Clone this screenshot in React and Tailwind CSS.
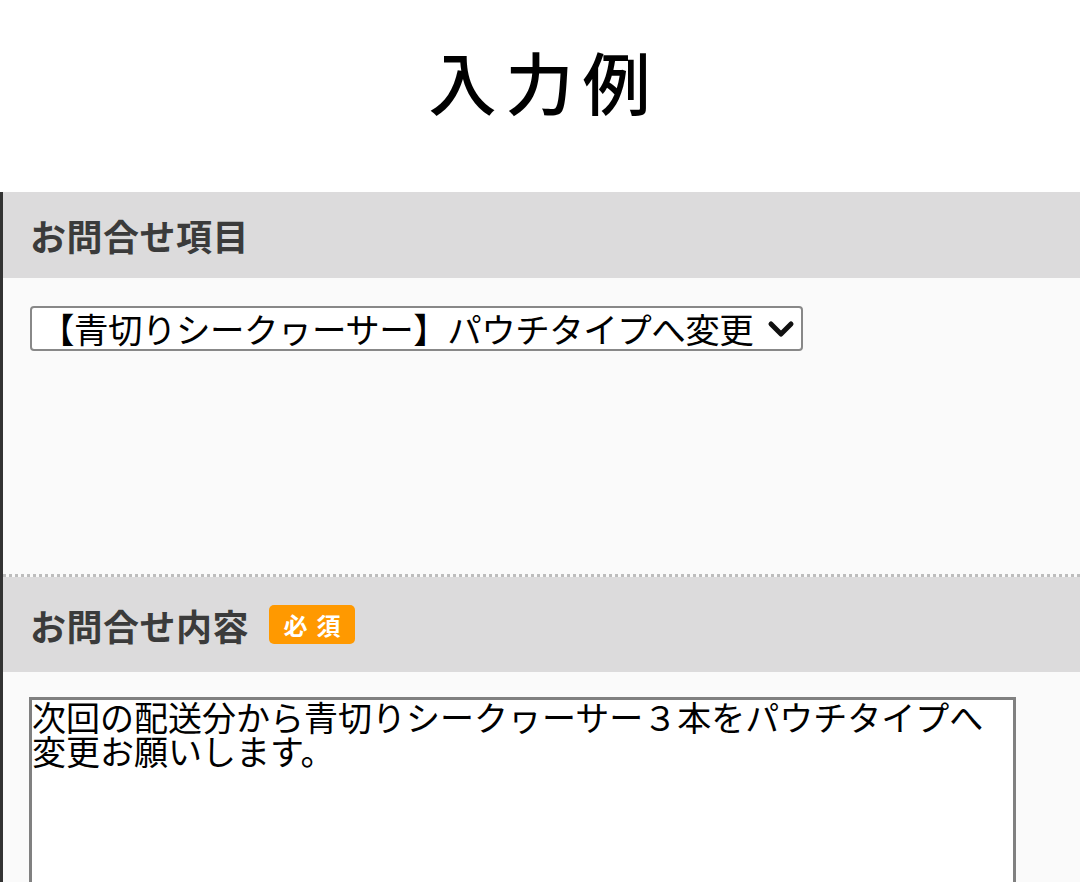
const JP = { fontFamily: '"Noto Sans CJK JP", "Noto Sans", sans-serif' };

export default function App() {
  return (
    <div className="w-[1080px] h-[882px] overflow-hidden bg-white" style={JP}>
      {/* タイトル */}
      <div className="h-[192px] flex items-start justify-center pt-[36px] pl-[8px]">
        <h1 className="text-[68px] leading-[90px] tracking-[9px] text-black font-medium">入力例</h1>
      </div>

      <div className="border-l-[3px] border-[#333] bg-[#fafafa]">
        {/* お問合せ項目 */}
        <div className="h-[86px] bg-[#dcdbdc] flex items-center pl-[27px]">
          <h2 className="text-[36px] font-bold text-[#3b3b3b] tracking-[0.5px]">お問合せ項目</h2>
        </div>
        <div className="h-[296px] pt-[28px] pl-[27px]">
          <div className="w-[773px] h-[45px] bg-white border-2 border-[#888] rounded-[4px] flex items-center pl-[8px] pr-[6px]">
            <span className="flex-1 text-[34.5px] leading-none text-black whitespace-nowrap tracking-[-0.5px]">
              【青切りシークヮーサー】パウチタイプへ変更
            </span>
            <svg width="28" height="20" viewBox="0 0 28 20" className="shrink-0">
              <path d="M4 5 L14 15 L24 5" fill="none" stroke="#111" strokeWidth="5" strokeLinecap="round" strokeLinejoin="round" />
            </svg>
          </div>
        </div>

        <div className="border-t-[3px] border-dotted border-[#bdbdbd]" />

        {/* お問合せ内容 */}
        <div className="h-[95px] bg-[#dcdbdc] flex items-center pl-[27px] gap-[20px]">
          <h2 className="text-[36px] font-bold text-[#3b3b3b] tracking-[0.5px]">お問合せ内容</h2>
          <span className="w-[86px] h-[39px] bg-[#ff9900] rounded-[5px] flex items-center justify-center text-white text-[24px] leading-none font-bold tracking-[9px] pl-[9px] whitespace-nowrap">
            必須
          </span>
        </div>
        <div className="h-[300px] pt-[25px] pl-[26px]">
          <div className="w-[987px] h-[400px] bg-white border-[3px] border-[#808080] text-[34px] leading-[34px] text-black">
            <p className="whitespace-nowrap">次回の配送分から青切りシークヮーサー３本をパウチタイプへ</p>
            <p className="whitespace-nowrap">変更お願いします。</p>
          </div>
        </div>
      </div>
    </div>
  );
}
